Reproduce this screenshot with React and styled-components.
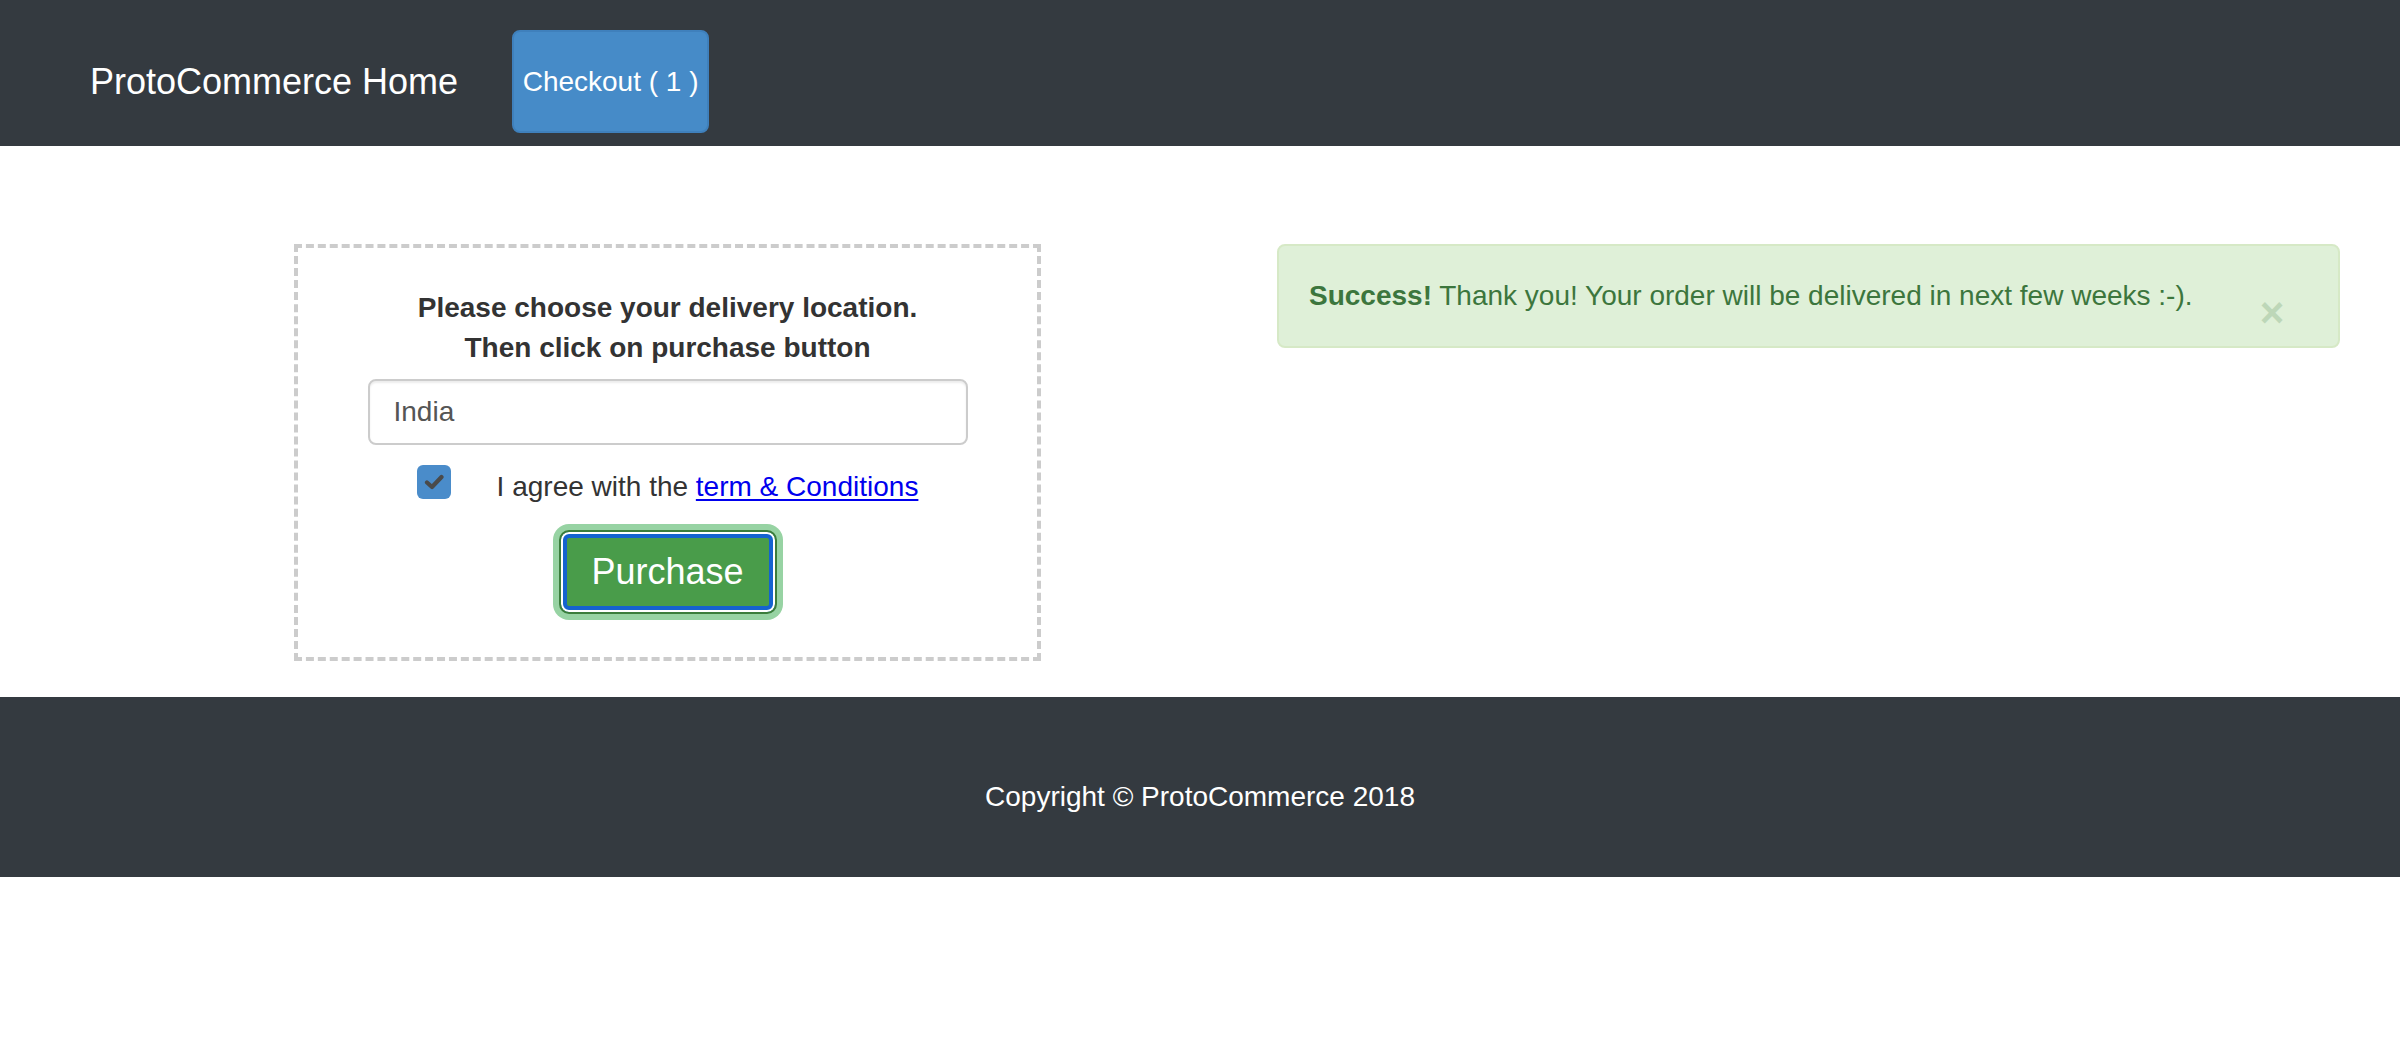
import React from "react";
import styled, { createGlobalStyle } from "styled-components";

const Global = createGlobalStyle`
  html, body {
    margin: 0;
    padding: 0;
    background: #ffffff;
  }
  body {
    font-family: "Liberation Sans", Arial, Helvetica, sans-serif;
    font-size: 28px;
    line-height: 40px;
    color: #333333;
  }
  * { box-sizing: border-box; }
`;

const NavBar = styled.nav`
  height: 146px;
  background: #343a40;
  display: flex;
  align-items: center;
  padding: 30px 0 13px 90px;
`;

const Brand = styled.a`
  font-size: 36px;
  line-height: 44px;
  color: #ffffff;
  text-decoration: none;
  white-space: nowrap;
`;

const CheckoutButton = styled.button`
  margin-left: 54px;
  width: 197px;
  height: 103px;
  padding: 0;
  background: #468bc8;
  border: 2px solid #3f80bc;
  border-radius: 8px;
  color: #ffffff;
  font-family: inherit;
  font-size: 28px;
  line-height: 40px;
  white-space: nowrap;
  cursor: pointer;
`;

const Main = styled.main`
  display: flex;
  align-items: flex-start;
  padding: 98px 0 36px 294px;
`;

const DeliveryBox = styled.section`
  width: 747px;
  border: 4px dashed #cccccc;
  padding: 40px 0 43px;
  display: flex;
  flex-direction: column;
  align-items: center;
`;

const Heading = styled.h4`
  margin: 0;
  font-size: 28px;
  line-height: 40px;
  font-weight: bold;
  color: #333333;
  text-align: center;
`;

const LocationInput = styled.input`
  margin-top: 11px;
  width: 600px;
  height: 66px;
  padding: 0 24px;
  border: 2px solid #cccccc;
  border-radius: 8px;
  box-shadow: inset 0 2px 2px rgba(0, 0, 0, 0.075);
  font-family: inherit;
  font-size: 28px;
  color: #555555;
  outline: none;
`;

const AgreeRow = styled.label`
  margin-top: 20px;
  display: flex;
  align-items: flex-start;
  gap: 46px;
  cursor: pointer;
`;

const CheckBox = styled.span`
  width: 34px;
  height: 34px;
  flex: none;
  border-radius: 6px;
  background: #4a8cca;
  display: flex;
  align-items: center;
  justify-content: center;
`;

const AgreeText = styled.span`
  padding-top: 5px;
  font-size: 28px;
  line-height: 34px;
  color: #333333;
  white-space: nowrap;
`;

const TermsLink = styled.a`
  color: #0000ee;
  text-decoration: underline;
  text-underline-offset: 3px;
`;

const PurchaseButton = styled.button`
  margin-top: 26px;
  width: 218px;
  height: 84px;
  padding: 0;
  background: #499c4a;
  border: 2px solid #3a7d3b;
  border-radius: 10px;
  box-shadow: 0 0 0 6px #97d3a3, inset 0 0 0 2px #ffffff,
    inset 0 0 0 6px #1463cf;
  color: #ffffff;
  font-family: inherit;
  font-size: 36px;
  line-height: 48px;
  cursor: pointer;
`;

const Alert = styled.div`
  margin-left: 236px;
  width: 1063px;
  height: 104px;
  padding: 30px;
  background: #dff0d8;
  border: 2px solid #d6e9c6;
  border-radius: 8px;
  color: #3c763d;
  display: flex;
  align-items: flex-start;
`;

const AlertText = styled.div`
  flex: 1;
  font-size: 28px;
  line-height: 40px;
  white-space: nowrap;
`;

const CloseButton = styled.button`
  margin: 16px 15px 0 0;
  width: 42px;
  height: 42px;
  padding: 0;
  background: transparent;
  border: 0;
  font-family: inherit;
  font-size: 42px;
  font-weight: bold;
  line-height: 42px;
  color: #3c763d;
  opacity: 0.2;
  text-align: center;
  cursor: pointer;
`;

const Footer = styled.footer`
  background: #343a40;
  padding: 80px 0 60px;
  text-align: center;
`;

const FooterText = styled.p`
  margin: 0;
  color: #ffffff;
  font-size: 28px;
  line-height: 40px;
`;

export default function App() {
  return (
    <>
      <Global />
      <NavBar>
        <Brand href="#">ProtoCommerce Home</Brand>
        <CheckoutButton>Checkout ( 1 )</CheckoutButton>
      </NavBar>
      <Main>
        <DeliveryBox>
          <Heading>
            Please choose your delivery location.
            <br />
            Then click on purchase button
          </Heading>
          <LocationInput defaultValue="India" />
          <AgreeRow>
            <CheckBox>
              <svg width="20" height="16" viewBox="0 0 20 16">
                <polyline
                  points="3,8.5 8,13 17.5,3"
                  fill="none"
                  stroke="#4a4a4a"
                  strokeWidth="4.2"
                  strokeLinecap="round"
                  strokeLinejoin="round"
                />
              </svg>
            </CheckBox>
            <AgreeText>
              I agree with the <TermsLink href="#">term &amp; Conditions</TermsLink>
            </AgreeText>
          </AgreeRow>
          <PurchaseButton>Purchase</PurchaseButton>
        </DeliveryBox>
        <Alert>
          <AlertText>
            <strong>Success!</strong> Thank you! Your order will be delivered in
            next few weeks :-).
          </AlertText>
          <CloseButton aria-label="close">×</CloseButton>
        </Alert>
      </Main>
      <Footer>
        <FooterText>Copyright © ProtoCommerce 2018</FooterText>
      </Footer>
    </>
  );
}
